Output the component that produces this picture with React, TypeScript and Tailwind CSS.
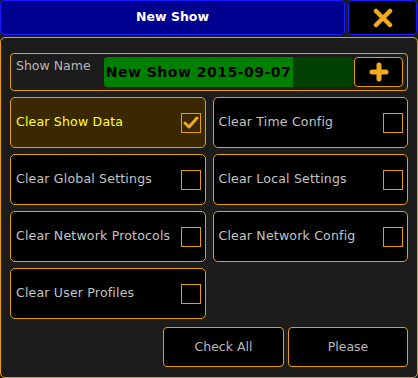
import React from 'react';

const font = { fontFamily: '"DejaVu Sans", "Liberation Sans", sans-serif' };

function Box({ checked }: { checked?: boolean }) {
  return (
    <div className="w-5 h-5 border border-[#e8a000] flex items-center justify-center shrink-0">
      {checked && (
        <svg width="16" height="14" viewBox="0 0 16 14">
          <path d="M2 7 L6 11 L14 2" stroke="#f2ab1c" strokeWidth="3" fill="none" strokeLinecap="round" strokeLinejoin="round" />
        </svg>
      )}
    </div>
  );
}

function Option({ label, checked }: { label: string; checked?: boolean }) {
  return (
    <div
      className={`h-[51px] rounded-[5px] border border-[#e8a000] flex items-center justify-between pl-[5px] pr-[4px] ${
        checked ? 'bg-[#3a2800] text-[#ffff30]' : 'bg-black text-[#c4c4c4]'
      }`}
    >
      <span className="text-[12.5px] tracking-[0.2px] whitespace-nowrap">{label}</span>
      <Box checked={checked} />
    </div>
  );
}

export default function App() {
  const opts: { label: string; checked?: boolean }[] = [
    { label: 'Clear Show Data', checked: true },
    { label: 'Clear Time Config' },
    { label: 'Clear Global Settings' },
    { label: 'Clear Local Settings' },
    { label: 'Clear Network Protocols' },
    { label: 'Clear Network Config' },
    { label: 'Clear User Profiles' },
  ];

  return (
    <div className="w-[418px] h-[378px] bg-[#1c1c1c] flex flex-col" style={font}>
      <div className="flex h-[35px] gap-[3px]">
        <div className="w-[345px] rounded-[4px] border border-[#1a1aff] bg-[#000090] flex items-center justify-center text-white font-bold text-[12.5px]">
          New Show
        </div>
        <div className="flex-1 rounded-[4px] border border-[#1a1aff] bg-black flex items-center justify-center mr-[1px]">
          <svg width="20" height="20" viewBox="0 0 20 20">
            <path d="M3 3 L17 17 M17 3 L3 17" stroke="#f2ab1c" strokeWidth="4.5" strokeLinecap="round" />
          </svg>
        </div>
      </div>
      <div className="mt-[2px] flex-1 rounded-[5px] border border-[#e8a000] bg-[#1c1c1c] px-[9px] pt-[15px]">
        <div className="h-[38px] rounded-[4px] border border-[#e8a000] flex items-center pl-[5px] pr-[4px]">
          <div className="w-[88px] self-start pt-[3px] text-[12.5px] text-[#b8b8b8]">Show Name</div>
          <div className="w-[250px] h-[30px] rounded-[4px] bg-[#004000] overflow-hidden flex">
            <div className="w-[189px] bg-[#008000] flex items-center pl-[2px] text-black font-bold text-[14px] tracking-[0.5px] whitespace-nowrap">
              New Show 2015-09-07
            </div>
          </div>
          <div className="ml-[1px] w-[49px] h-[30px] rounded-[4px] border border-[#e8a000] bg-black flex items-center justify-center">
            <svg width="20" height="20" viewBox="0 0 20 20">
              <path d="M10 3 V17 M3 10 H17" stroke="#f2ab1c" strokeWidth="5" strokeLinecap="round" />
            </svg>
          </div>
        </div>
        <div className="mt-[6px] grid grid-cols-2 gap-x-[7px] gap-y-[6px]">
          {opts.map((o) => (
            <Option key={o.label} label={o.label} checked={o.checked} />
          ))}
        </div>
        <div className="mt-[8px] flex justify-end gap-[4px]">
          <button className="w-[121px] h-[40px] rounded-[4px] border border-[#e8a000] bg-black text-[#b8b8b8] text-[12.5px]">
            Check All
          </button>
          <button className="w-[120px] h-[40px] rounded-[4px] border border-[#e8a000] bg-black text-[#b8b8b8] text-[12.5px]">
            Please
          </button>
        </div>
      </div>
    </div>
  );
}
